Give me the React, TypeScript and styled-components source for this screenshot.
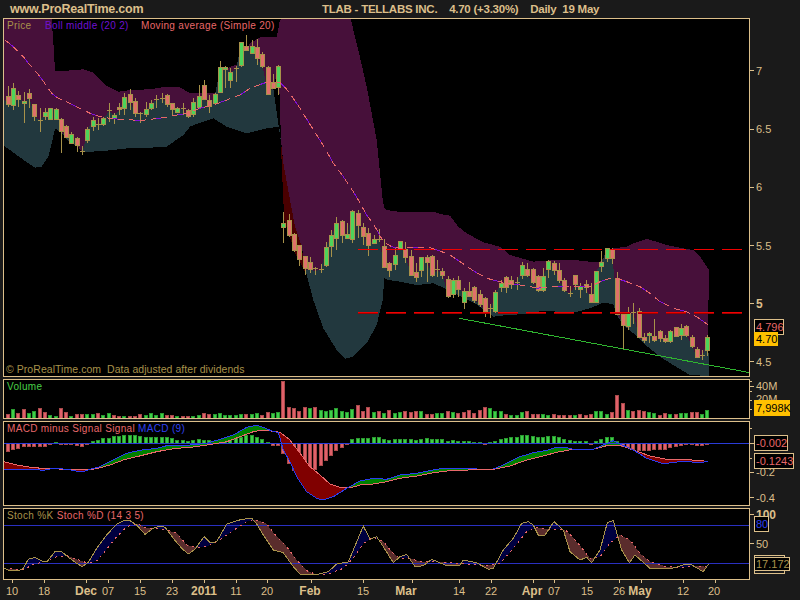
import React from 'react';
import styled, { createGlobalStyle } from 'styled-components';

const TAN = '#dcbf8a';
const OLIVE = '#a8924a';
const PINK = '#e8686a';
const STEP = 15.9;

type Pt = [number, number];

const Global = createGlobalStyle`
  html, body { margin: 0; padding: 0; background: #1a1a1a; }
  svg { display: block; }
  svg text { font-family: "Liberation Sans", Arial, sans-serif; }
`;

const Page = styled.div`
  width: 800px; height: 600px; overflow: hidden; background: #1a1a1a;
  display: flex; flex-direction: column;
  font-family: "Liberation Sans", Arial, sans-serif;
  color: ${TAN};
`;
const Header = styled.header`
  height: 18px; display: flex; align-items: center; position: relative;
  font-weight: bold; white-space: pre; line-height: 18px;
`;
const Brand = styled.div`
  font-size: 12.5px; margin-left: 10px; width: 312px; letter-spacing: -0.22px;
`;
const Title = styled.div`font-size: 11.5px; letter-spacing: -0.25px;`;
const Panes = styled.main`display: flex; flex-direction: column; gap: 2px;`;
const Row = styled.section<{ $h: number }>`
  display: flex; height: ${p => p.$h}px; padding-left: 3px;
`;
const Plot = styled.div`
  width: 747px; box-sizing: border-box; border: 1px solid ${TAN};
  background: #000; position: relative; overflow: hidden; flex: none;
`;
const Legend = styled.div`
  position: absolute; left: 3px; top: 0; display: flex; white-space: pre;
  font-size: 10px; line-height: 13px; letter-spacing: 0.33px;
`;
const Item = styled.span<{ $c: string; $w?: number }>`
  color: ${p => p.$c}; ${p => (p.$w ? `width:${p.$w}px;` : '')}
`;
const Note = styled.div`
  position: absolute; left: 2px; bottom: 0; font-size: 10.5px; line-height: 14px;
  letter-spacing: 0.05px; color: ${OLIVE}; white-space: pre;
`;
const DateRow = styled.div`height: 20px; flex: none;`;

const svgFor = (x: number, y: number, w: number, h: number) => ({
  viewBox: `${x} ${y} ${w} ${h}`, width: w, height: h,
});

const cx = (i: number) => Math.floor((25 + STEP * i) / 3);

// [kind, bodyTop, bodyBottom, wickTop, wickBottom] in 3x page coordinates
const A = 'g'; const B = 'r'; const F = 'f';
const raw: [string, number, number, number, number][] = [
  [B,288,312,258,320],[A,265,317,248,330],[B,285,297,272,320],[A,304,311,275,368],[B,280,296,268,325],
  [B,312,350,312,362],[F,360,362,325,395],[A,337,350,325,360],[A,325,358,323,360],[A,327,357,325,359],
  [B,358,395,355,458],[B,380,412,375,415],[A,403,431,395,432],[B,414,437,410,455],[F,454,457,438,465],
  [A,388,420,380,430],[A,361,380,350,393],[F,373,376,355,390],[A,355,373,350,378],[F,330,334,310,367],
  [A,345,355,340,372],[B,321,329,310,345],[A,292,325,280,345],[B,282,307,268,330],[B,303,339,295,350],
  [F,340,342,335,368],[A,328,344,305,350],[A,310,325,300,330],[F,298,300,285,325],[F,293,295,278,308],
  [B,286,313,283,320],[B,310,328,308,345],[A,325,337,320,340],[F,325,330,310,345],[B,331,350,328,355],
  [A,307,343,295,350],[A,290,323,255,325],[B,256,297,240,300],[B,301,318,285,338],[A,283,311,280,315],
  [A,202,278,182,280],[A,202,208,198,265],[A,217,241,205,265],[F,204,207,198,245],[A,127,197,125,200],
  [B,139,150,105,150],[A,139,160,120,162],[B,142,175,118,195],[B,163,200,155,205],[B,202,282,198,285],
  [B,248,265,222,268],[A,198,262,195,285],
  [A,670,682,635,730],[B,660,707,642,712],[B,703,750,700,755],[B,735,777,735,797],[B,768,805,768,825],
  [B,787,807,770,818],[F,805,812,800,825],[F,808,810,792,818],[A,741,797,725,800],[A,705,740,690,770],
  [A,670,715,650,750],[B,663,705,660,730],[A,703,716,670,718],[A,633,717,630,728],[B,640,677,630,715],
  [B,682,708,670,735],[B,700,737,685,767],[A,718,730,705,733],[F,717,722,688,725],[B,740,803,718,805],
  [B,790,812,785,830],[A,765,792,745,810],[A,725,745,725,750],
  [B,748,772,725,788],[B,770,825,750,828],[B,818,833,790,847],[A,773,812,770,830],[B,772,787,765,845],
  [B,769,825,765,832],[F,807,809,780,830],[B,813,827,805,837],[B,838,890,828,895],[A,841,882,835,895],
  [B,841,868,828,890],[A,875,907,865,927],[B,874,890,845,892],[B,862,900,858,910],[B,883,914,870,922],
  [B,895,935,890,950],[F,924,927,912,955],[A,877,935,870,940],[A,850,863,840,875],[B,832,862,828,878],
  [B,840,852,828,868],[F,847,850,830,870],[A,795,827,785,837],[B,808,826,790,830],[B,807,848,805,852],
  [B,830,872,825,875],[A,828,871,805,875],[A,783,807,780,835],[B,790,812,782,825],[B,810,842,790,850],
  [B,842,872,835,875],[F,878,881,858,890],[B,825,854,825,870],[A,858,868,850,893],[B,854,863,840,880],
  [B,882,906,850,908],[A,813,907,813,908],[A,786,798,752,815],[A,745,775,745,785],[B,747,775,745,792],
  [B,834,943,815,945],[B,942,977,940,1048],[A,939,980,922,990],[F,935,942,910,972],[B,933,1013,925,1015],
  [B,1011,1022,1000,1030],[A,1000,1006,995,1030],[B,1008,1022,958,1025],[B,993,1015,990,1025],[B,1015,1025,1005,1028],
  [A,993,1025,990,1028],[B,982,1010,980,1012],[A,985,1006,972,1020],[B,978,1006,975,1010],[B,1011,1038,1005,1045],
  [B,1047,1073,1040,1075],[F,1066,1069,1050,1080],[A,1011,1050,1005,1068],
];

const upper: Pt[] = [[12,57],[155,57],[160,125],[165,212],[200,212],[250,208],[280,218],[320,258],[355,275],[390,270],[450,268],[500,260],[540,262],[570,280],[650,280],[660,240],[680,205],[720,190],[750,130],[780,112],[830,110],[840,60],[843,57],[1052,57],[1075,150],[1100,260],[1130,420],[1148,600],[1152,620],[1158,630],[1200,636],[1300,635],[1325,643],[1350,647],[1375,680],[1400,700],[1450,727],[1500,740],[1530,765],[1600,785],[1635,782],[1680,780],[1730,781],[1770,785],[1800,785],[1840,745],[1880,740],[1900,730],[1940,717],[1970,725],[2000,735],[2060,747],[2080,750],[2100,770],[2127,810]];
const lower: Pt[] = [[12,437],[50,465],[85,490],[105,503],[125,500],[145,470],[155,430],[165,385],[180,395],[213,430],[232,437],[247,457],[320,452],[400,443],[450,443],[500,440],[550,405],[570,380],[600,368],[640,355],[680,380],[740,400],[800,385],[838,380],[842,420],[920,825],[940,900],[970,985],[1010,1050],[1035,1076],[1060,1070],[1100,1030],[1130,975],[1148,900],[1153,835],[1165,840],[1200,845],[1250,855],[1300,850],[1335,865],[1375,885],[1425,910],[1480,950],[1520,945],[1580,942],[1630,932],[1720,938],[1770,925],[1810,908],[1840,912],[1850,945],[1870,975],[1900,1000],[1930,1030],[1980,1070],[2020,1095],[2070,1125],[2127,1128]];
const close = raw.map((c, i) => [25 + STEP * i, c[0] === A ? c[1] : c[2]] as Pt);
const mid: Pt[] = [[12, 300], ...close.slice(0, 52), [843,420],[850,490],[870,600],[885,680],[905,740],[918,810], ...close.slice(58)];
const ma: Pt[] = [[15,120],[40,140],[70,170],[85,190],[100,205],[120,230],[140,258],[155,280],[175,295],[200,305],[225,318],[250,330],[275,342],[300,350],[330,355],[360,358],[400,360],[420,362],[460,357],[500,352],[520,347],[560,340],[600,325],[640,315],[680,300],[720,285],[750,265],[790,250],[820,243],[840,248],[855,262],[880,295],[900,325],[925,365],[950,405],[975,445],[1000,490],[1030,530],[1060,575],[1075,600],[1100,645],[1125,680],[1150,725],[1175,740],[1200,745],[1225,742],[1290,743],[1320,753],[1350,765],[1380,785],[1420,812],[1460,835],[1500,845],[1540,853],[1580,857],[1610,865],[1650,860],[1690,858],[1730,860],[1770,860],[1800,845],[1840,832],[1880,845],[1920,860],[1950,880],[1980,905],[2020,925],[2060,935],[2090,950],[2125,975]];

const pts = (p: Pt[]) => p.map(([x, y]) => `${(x / 3).toFixed(1)},${(y / 3).toFixed(1)}`).join(' ');
const interp = (p: Pt[], x: number) => {
  if (x <= p[0][0]) return p[0][1];
  for (let i = 1; i < p.length; i++) {
    if (x <= p[i][0]) {
      const t = (x - p[i - 1][0]) / (p[i][0] - p[i - 1][0] || 1);
      return p[i - 1][1] + t * (p[i][1] - p[i - 1][1]);
    }
  }
  return p[p.length - 1][1];
};

// Regions between two curves, split where they cross. a above b (smaller y) gives colour "up".
const fills = (a: Pt[], b: Pt[], up: string, down: string) => {
  const start = Math.max(a[0][0], b[0][0]);
  const end = Math.min(a[a.length - 1][0], b[b.length - 1][0]);
  const out: { d: string; c: string }[] = [];
  let runA: Pt[] = []; let runB: Pt[] = []; let sign = 0;
  const flush = () => {
    if (runA.length > 1) out.push({ d: pts([...runA, ...runB.reverse()]), c: sign > 0 ? up : down });
    runA = []; runB = [];
  };
  for (let x = start; x <= end; x += 3) {
    const ya = interp(a, x); const yb = interp(b, x);
    const s = ya < yb ? 1 : -1;
    if (s !== sign) {
      const la = runA[runA.length - 1]; const lb = runB[runB.length - 1];
      flush();
      if (la && lb) { runA.push(la); runB.push(lb); }
      sign = s;
    }
    runA.push([x, ya]); runB.push([x, yb]);
  }
  flush();
  return out;
};

const dashXs = Array.from({ length: 14 }, (_, i) => 358 + i * 28);

const PriceChart = () => (
  <svg {...svgFor(4, 19, 745, 357)}>
    <polygon points={pts([...upper, ...[...mid].reverse()])} fill="#47103a" shapeRendering="crispEdges" />
    <polygon points={pts([...mid.slice(0, 52), [842, 420], ...lower.slice().reverse().filter(p => p[0] <= 842)])} fill="#22383e" shapeRendering="crispEdges" />
    <polygon points={pts([[918,810], ...mid.slice(58), [2127,1100],[2127,1128], ...lower.slice().reverse().filter(p => p[0] >= 920)])} fill="#22383e" shapeRendering="crispEdges" />
    <polygon points={pts([[842,420],[850,600],[853,660],[885,760],[915,815],[905,740],[885,680],[870,600],[850,490]])} fill="#4a0000" shapeRendering="crispEdges" />
    {raw.map((c, i) => {
      const x = cx(i);
      return (
        <g key={i} shapeRendering="crispEdges">
          <line x1={x + 0.5} x2={x + 0.5} y1={c[3] / 3} y2={c[4] / 3} stroke={OLIVE} />
          {c[0] === F
            ? <line x1={x - 2} x2={x + 3} y1={c[1] / 3 + 0.5} y2={c[1] / 3 + 0.5} stroke={OLIVE} />
            : <rect x={x - 2 + 0.5} y={c[1] / 3} width={4} height={Math.max(2, (c[2] - c[1]) / 3)}
                fill={c[0] === A ? '#4dd45a' : '#e0706a'} stroke={OLIVE} />}
        </g>
      );
    })}
    <polyline points={pts(ma)} fill="none" stroke={PINK} strokeDasharray="6 5" shapeRendering="crispEdges" />
    <polyline points={pts(ma)} fill="none" stroke="#8010d8" strokeDasharray="5 17" strokeDashoffset={-6} shapeRendering="crispEdges" />
    {dashXs.map(x => (
      <line key={x} x1={x} x2={x + 20} y1={249.5} y2={249.5} stroke="#f00000" shapeRendering="crispEdges" />
    ))}
    {dashXs.map(x => (
      <g key={x} shapeRendering="crispEdges">
        <line x1={x} x2={x + 20} y1={312.5} y2={312.5} stroke="#f00000" />
        <line x1={x} x2={x + 20} y1={313.5} y2={313.5} stroke="#a00000" />
      </g>
    ))}
    <line x1={459.3} y1={318.3} x2={750} y2={372.7} stroke="#2fb52f" shapeRendering="crispEdges" />
  </svg>
);

const vol: [string, number][] = [
  ['r',133],['g',118],['r',128],['r',118],['g',128],['g',122],['r',114],['r',127],['g',135],['g',137],
  ['r',114],['r',125],['g',138],['r',133],['r',133],['g',133],['g',133],['r',130],['g',136],['g',130],
  ['r',136],['r',139],['g',137],['r',139],['r',138],['r',133],['g',136],['g',130],['g',134],['g',130],
  ['r',136],['r',136],['g',139],['r',139],['r',139],['g',137],['g',135],['r',130],['r',132],['g',131],
  ['g',130],['g',135],['g',135],['g',135],['g',133],['r',133],['g',131],['g',130],['r',135],['r',126],
  ['g',130],['g',127],['r',33],['r',112],['r',114],['r',122],['r',111],['g',114],['r',111],['g',121],
  ['g',123],['g',120],['g',114],['g',124],['g',127],['g',118],['r',105],['r',123],['r',112],['g',127],
  ['r',124],['g',130],['r',121],['g',128],['g',126],['r',124],['r',126],['r',124],['g',123],['r',132],
  ['r',132],['g',129],['g',129],['r',124],['g',127],['r',129],['r',126],['r',120],['r',130],['r',120],
  ['r',111],['g',115],['g',123],['g',123],['r',132],['g',135],['g',135],['g',126],['r',124],['r',132],
  ['r',132],['g',132],['g',135],['r',132],['r',136],['r',135],['r',135],['g',135],['r',132],['r',135],
  ['r',132],['g',123],['g',123],['g',132],['r',126],['r',75],['r',99],['g',120],['r',124],['r',120],
  ['r',124],['g',126],['g',129],['r',135],['r',129],['g',132],['r',132],['g',129],['g',129],['r',126],
  ['r',126],['g',132],['g',120],
];

const Bar = ({ i, y0, y1, c }: { i: number; y0: number; y1: number; c: string }) => {
  const top = Math.round(Math.min(y0, y1));
  const h = Math.max(1, Math.round(Math.abs(y1 - y0)));
  return (
    <rect x={cx(i) - 1.5} y={top + 0.5} width={3} height={h - 0.5 > 0 ? h - 0.5 : 0.5}
      fill={c === 'r' ? '#e0606a' : '#3ed048'} stroke={c === 'r' ? '#a84a4a' : '#2a9a30'}
      shapeRendering="crispEdges" />
  );
};

const VolumeChart = () => (
  <svg {...svgFor(4, 380, 745, 38)}>
    {vol.map(([c, t], i) => <Bar key={i} i={i} y0={370 + t / 3} y1={418} c={c} />)}
  </svg>
);

const hist: number[] = [
  242,237,233,228,227,227,227,227,222,216,222,223,223,225,227,220,213,210,205,203,
  198,197,195,195,196,199,201,202,202,201,202,205,210,210,212,210,208,211,211,212,
  207,203,204,204,200,196,195,201,206,216,224,224,250,280,300,303,305,300,297,285,
  270,255,240,232,222,207,205,203,204,202,202,207,210,208,208,207,208,210,207,205,
  207,208,207,213,211,213,213,213,216,216,222,216,212,206,204,202,201,196,195,198,
  200,201,198,198,202,206,210,213,213,213,222,213,207,201,201,212,228,232,237,240,
  241,240,238,237,236,232,228,225,222,222,225,225,222,
];
const sig: Pt[] = [[12,275],[50,285],[100,293],[150,296],[200,298],[250,300],[290,296],[330,285],[370,270],[410,260],[470,245],[520,236],[580,231],[640,222],[680,215],[720,200],[760,185],[790,180],[840,187],[870,210],[900,250],[930,290],[960,315],[990,342],[1020,352],[1050,354],[1080,345],[1120,342],[1160,335],[1200,325],[1250,318],[1300,308],[1350,302],[1430,299],[1480,298],[1530,288],[1580,270],[1630,258],[1670,247],[1720,238],[1780,238],[1820,227],[1860,226],[1900,240],[1950,258],[2000,268],[2050,268],[2100,272],[2125,274]];
const macd: Pt[] = [[12,298],[50,298],[100,298],[130,301],[160,295],[200,298],[245,306],[270,298],[300,290],[340,270],[380,250],[420,241],[470,235],[500,227],[560,226],[620,220],[660,208],[700,195],[740,172],[770,166],[800,176],[820,185],[835,187],[850,240],[870,275],[890,320],[920,365],[950,385],[970,390],[1000,380],[1040,355],[1080,333],[1120,325],[1160,328],[1200,315],[1250,310],[1300,300],[1330,295],[1370,296],[1430,297],[1480,297],[1510,285],[1560,260],[1600,248],[1640,241],[1670,232],[1700,233],[1720,238],[1780,238],[1810,225],[1840,212],[1860,222],[1900,240],[1940,265],[1990,281],[2050,274],[2100,278],[2125,274]];

const MacdChart = () => (
  <svg {...svgFor(4, 422, 745, 83)}>
    {hist.map((t, i) => <Bar key={i} i={i} y0={370 + t / 3} y1={443} c={t < 220 ? 'g' : 'r'} />)}
    {fills(macd.map(([x, y]) => [x, y + 1110] as Pt), sig.map(([x, y]) => [x, y + 1110] as Pt), '#008000', '#800000').map((f, i) => (
      <polygon key={i} points={f.d} fill={f.c} shapeRendering="crispEdges" />
    ))}
    <line x1={4} x2={749} y1={443.5} y2={443.5} stroke="#2a3cd8" shapeRendering="crispEdges" />
    <polyline points={pts(sig.map(([x, y]) => [x, y + 1110] as Pt))} fill="none" stroke={PINK} shapeRendering="crispEdges" />
    <polyline points={pts(macd.map(([x, y]) => [x, y + 1110] as Pt))} fill="none" stroke="#2a3cf0" shapeRendering="crispEdges" />
  </svg>
);

const kLine: Pt[] = [[12,205],[30,212],[55,212],[70,205],[85,178],[105,172],[125,183],[140,186],[165,155],[185,155],[205,172],[230,190],[247,200],[265,187],[290,145],[320,105],[350,72],[370,62],[390,62],[410,75],[435,103],[460,85],[480,78],[495,82],[520,115],[545,145],[565,162],[585,148],[612,110],[630,128],[650,125],[680,72],[700,66],[725,58],[755,55],[770,72],[790,105],[820,150],[850,158],[880,200],[900,222],[950,224],[985,215],[1010,192],[1045,186],[1090,78],[1110,118],[1130,110],[1150,140],[1180,188],[1200,170],[1220,163],[1245,200],[1270,197],[1295,178],[1340,197],[1380,195],[1390,180],[1430,188],[1465,208],[1480,205],[1510,150],[1540,115],[1565,70],[1585,65],[1600,75],[1615,105],[1635,105],[1662,65],[1690,90],[1710,155],[1740,180],[1760,172],[1775,188],[1800,150],[1822,68],[1840,62],[1865,150],[1888,188],[1905,165],[1950,205],[1990,205],[2010,207],[2050,195],[2070,192],[2110,215],[2125,193]];
const dLine: Pt[] = [[12,205],[40,207],[70,210],[100,193],[130,186],[170,170],[200,167],[230,178],[265,190],[290,182],[320,148],[350,110],[380,80],[410,70],[440,85],[470,85],[500,90],[530,100],[560,135],[590,143],[620,140],[650,125],[680,105],[710,85],[740,65],[770,60],[800,72],[830,110],[860,140],[890,180],[920,212],[950,224],[985,222],[1030,205],[1060,175],[1090,130],[1120,112],[1150,125],[1180,160],[1200,175],[1230,175],[1260,185],[1300,185],[1350,188],[1400,192],[1460,197],[1500,190],[1540,145],[1580,95],[1610,83],[1640,88],[1680,88],[1700,93],[1730,125],[1770,175],[1800,170],[1830,130],[1860,105],[1890,120],[1920,160],[1950,185],[2000,200],[2050,203],[2080,198],[2125,200]];
const shift = (p: Pt[], dy: number) => p.map(([x, y]) => [x, y + dy] as Pt);

const StochChart = () => (
  <svg {...svgFor(4, 509, 745, 70)}>
    {fills(shift(kLine, 1500), shift(dLine, 1500), '#000040', '#5a2c2c').map((f, i) => (
      <polygon key={i} points={f.d} fill={f.c} shapeRendering="crispEdges" />
    ))}
    <line x1={4} x2={749} y1={525.5} y2={525.5} stroke="#2a30c0" shapeRendering="crispEdges" />
    <line x1={4} x2={749} y1={563.5} y2={563.5} stroke="#2a30c0" shapeRendering="crispEdges" />
    <polyline points={pts(shift(dLine, 1500))} fill="none" stroke={PINK} strokeDasharray="2 4" shapeRendering="crispEdges" />
    <polyline points={pts(shift(kLine, 1500))} fill="none" stroke={OLIVE} shapeRendering="crispEdges" />
  </svg>
);

const Tick = ({ y, w = 4 }: { y: number; w?: number }) => (
  <line x1={750} x2={750 + w} y1={y + 0.5} y2={y + 0.5} stroke={TAN} shapeRendering="crispEdges" />
);
const Label = ({ y, t, b, c = TAN, x = 756, size = 11 }: { y: number; t: string; b?: boolean; c?: string; x?: number; size?: number }) => (
  <text x={x} y={y} fontSize={size} fontWeight={b ? 'bold' : 'normal'} fill={c}>{t}</text>
);
const Tag = ({ x, y, w, h, t, bg = '#000', c = PINK, border = TAN, size = 11 }: { x: number; y: number; w: number; h: number; t: string; bg?: string; c?: string; border?: string; size?: number }) => (
  <g>
    <rect x={x + 0.5} y={y + 0.5} width={w - 1} height={h - 1} fill={bg} stroke={border} shapeRendering="crispEdges" />
    <text x={x + 2} y={y + h / 2 + 4} fontSize={size} fill={c}>{t}</text>
  </g>
);

const PriceAxis = () => (
  <svg {...svgFor(750, 18, 50, 359)}>
    {[70, 129, 187, 245, 303, 361].map(y => <Tick key={y} y={y} />)}
    <Label y={75} t="7" />
    <Label y={133} t="6.5" />
    <Label y={191} t="6" />
    <Label y={250} t="5.5" />
    <Label y={308} t="5" b size={12} />
    <Label y={366} t="4.5" />
    <Tag x={754} y={319} w={30} h={16} t="4.796" />
    <Tag x={754} y={332} w={24} h={14} t="4.70" bg="#ffc000" c="#000" border="#ffc000" />
  </svg>
);
const VolumeAxis = () => (
  <svg {...svgFor(750, 379, 50, 40)}>
    {[381, 391, 400, 409].map(y => <Tick key={y} y={y} w={2} />)}
    <Tick y={386} />
    <Label y={390} t="40M" />
    <Label y={403} t="20M" />
    <Tag x={754} y={400} w={36} h={16} t="7,998K" bg="#ffc000" c="#000" border="#ffc000" />
  </svg>
);
const MacdAxis = () => (
  <svg {...svgFor(750, 421, 50, 85)}>
    {[428, 458].map(y => <Tick key={y} y={y} w={2} />)}
    {[443, 472, 497].map(y => <Tick key={y} y={y} />)}
    <Label y={476} t="-0.2" />
    <Label y={502} t="-0.4" />
    <Tag x={754} y={435} w={34} h={16} t="-0.002" />
    <Tag x={754} y={453} w={40} h={16} t="-0.1243" />
  </svg>
);
const StochAxis = () => (
  <svg {...svgFor(750, 508, 50, 72)}>
    <Tick y={514} />
    <Tick y={543} />
    <Label y={519} t="100" b size={12} />
    <Label y={548} t="50" />
    <rect x={754.5} y={555.5} width={30} height={18} fill="none" stroke={TAN} shapeRendering="crispEdges" />
    <Tag x={754} y={516} w={15} h={16} t="80" c="#3040f0" />
    <Tag x={754} y={557} w={36} h={14} t="17.172" c={OLIVE} />
  </svg>
);

const dates: [number, string, boolean?][] = [
  [12, '10'], [44, '18'], [86, 'Dec', true], [108, '07'], [140, '15'], [172, '23'], [204, '2011', true],
  [236, '11'], [267, '20'], [310, 'Feb', true], [363, '15'], [406, 'Mar', true], [459, '14'], [491, '22'],
  [532, 'Apr', true], [554, '07'], [587, '15'], [619, '26'], [640, 'May', true], [683, '12'], [714, '20'],
];
const tickXs = [12, 44, 86, 108, 140, 172, 204, 236, 267, 311, 363, 412, 459, 491, 533, 554, 588, 619, 641, 683, 715];

const DateAxis = () => (
  <svg {...svgFor(0, 580, 800, 20)}>
    {tickXs.map(x => <line key={x} x1={x + 0.5} x2={x + 0.5} y1={580} y2={583} stroke={TAN} shapeRendering="crispEdges" />)}
    {dates.map(([x, t, b]) => (
      <text key={t + x} x={x} y={595} textAnchor="middle" fontSize={b ? 12 : 11} fontWeight={b ? 'bold' : 'normal'} fill={TAN}>{t}</text>
    ))}
  </svg>
);

export default function App() {
  return (
    <Page>
      <Global />
      <Header>
        <Brand>www.ProRealTime.com</Brand>
        <Title>{'TLAB - TELLABS INC.    4.70 (+3.30%)    Daily  19 May'}</Title>
      </Header>
      <Panes>
        <Row $h={359}>
          <Plot>
            <PriceChart />
            <Legend>
              <Item $c={OLIVE} $w={38}>Price</Item>
              <Item $c="#7010d0" $w={96}>Boll middle (20 2)</Item>
              <Item $c={PINK}>Moving average (Simple 20)</Item>
            </Legend>
            <Note>© ProRealTime.com  Data adjusted after dividends</Note>
          </Plot>
          <PriceAxis />
        </Row>
        <Row $h={40}>
          <Plot>
            <VolumeChart />
            <Legend><Item $c="#48d048">Volume</Item></Legend>
          </Plot>
          <VolumeAxis />
        </Row>
        <Row $h={85}>
          <Plot>
            <MacdChart />
            <Legend>
              <Item $c={PINK}>{'MACD minus Signal Signal '}</Item>
              <Item $c="#3040f0">MACD (9)</Item>
            </Legend>
          </Plot>
          <MacdAxis />
        </Row>
        <Row $h={72}>
          <Plot>
            <StochChart />
            <Legend>
              <Item $c={OLIVE}>{'Stoch %K '}</Item>
              <Item $c={PINK}>Stoch %D (14 3 5)</Item>
            </Legend>
          </Plot>
          <StochAxis />
        </Row>
      </Panes>
      <DateRow><DateAxis /></DateRow>
    </Page>
  );
}
